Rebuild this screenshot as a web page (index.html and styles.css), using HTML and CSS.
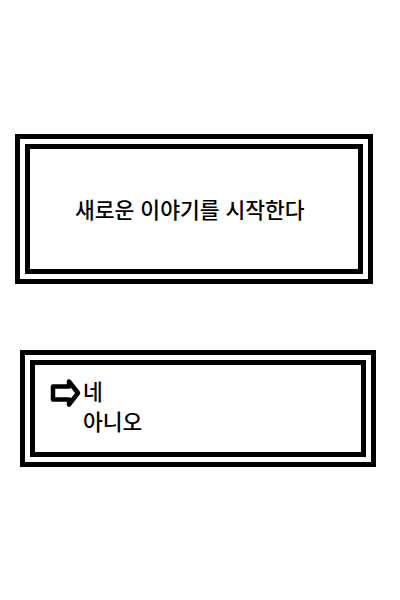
FILE: index.html
```html
<!DOCTYPE html>
<html lang="ko">
<head>
    <meta charset="UTF-8">
    <meta name="viewport" content="width=device-width, initial-scale=1.0">
    <title>이야기</title>
    <link rel="stylesheet" href="styles.css">
</head>
<body>
<div class="screen">
    <!-- 시작 메시지 -->
    <div class="dialog dialog-title">
        <div class="dialog-inner">
            <p class="message">새로운 이야기를 시작한다</p>
        </div>
    </div>

    <!-- 선택지 -->
    <div class="dialog dialog-choice">
        <div class="dialog-inner">
            <ul class="choices">
                <li class="choice selected">
                    <svg class="cursor" width="32" height="30" viewBox="0 0 32 30">
                        <polygon points="4,10.5 20,10.5 20,5.5 29,17 20,28.5 20,23.5 4,23.5"
                                 fill="#fff" stroke="#000" stroke-width="4.5" stroke-linejoin="round"/>
                    </svg>
                    <span>네</span>
                </li>
                <li class="choice">
                    <span>아니오</span>
                </li>
            </ul>
        </div>
    </div>
</div>
</body>
</html>
```

FILE: styles.css
```css
* {
    margin: 0;
    padding: 0;
    box-sizing: border-box;
    font-family: "Noto Sans CJK KR", "Noto Sans", sans-serif;
}

body {
    background: #fff;
    color: #000;
}

.screen {
    display: flex;
    flex-direction: column;
    padding-top: 134px;
}

.dialog {
    border: 5px solid #000;
    padding: 5px;
    background: #fff;
}

.dialog-inner {
    border: 5px solid #000;
    height: 100%;
}

.dialog-title {
    width: 358px;
    height: 150px;
    margin-left: 15px;
}

.dialog-title .dialog-inner {
    display: flex;
    align-items: center;
    padding-left: 45px;
}

.message {
    font-size: 21.5px;
    font-weight: 500;
    line-height: 30px;
}

.dialog-choice {
    width: 356px;
    height: 117px;
    margin-top: 66px;
    margin-left: 20px;
}

.dialog-choice .dialog-inner {
    padding: 11px 0 0 14px;
}

.choices {
    list-style: none;
}

.choice {
    display: grid;
    grid-template-columns: 34px auto;
    font-size: 21.5px;
    font-weight: 500;
    line-height: 30px;
}

.choice span {
    grid-column: 2;
}

.cursor {
    display: block;
    overflow: visible;
}
```
